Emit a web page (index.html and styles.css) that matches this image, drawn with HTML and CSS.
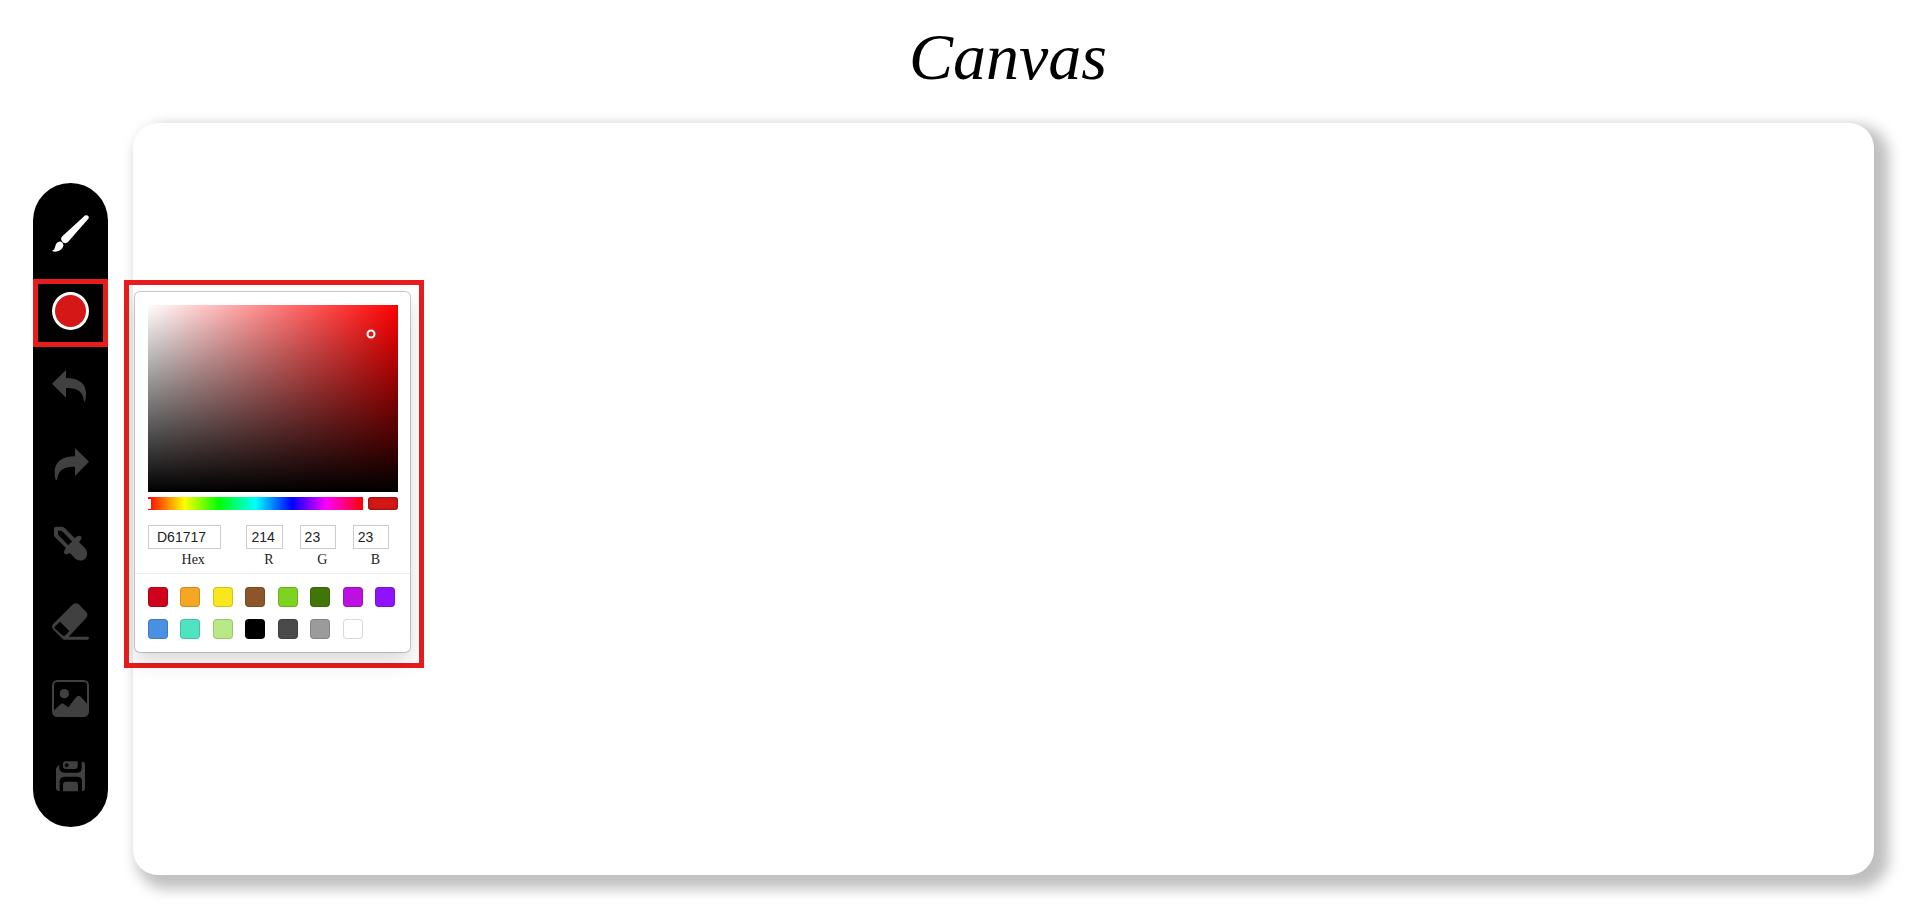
FILE: index.html
```html
<!DOCTYPE html>
<html lang="en">
<head>
<meta charset="utf-8">
<title>Canvas</title>
<link rel="stylesheet" href="styles.css">
</head>
<body>
<header class="header"><h1 class="title">Canvas</h1></header>
<main class="workspace">
  <div class="toolbar" role="toolbar" aria-label="Drawing tools">
    <button class="tool tool-active" aria-label="Brush"><svg viewBox="0 0 111 111"><path d="M98 2C105-2 114 4 109 11L50 79C45 86 36 86 31 80C26 75 26 69 31 64ZM0 108C10 104 8 96 12 88C17 79 26 77 31 83C37 90 34 97 28 103C20 110 8 112 0 108Z"/></svg></button>
    <div class="color-tool">
      <button class="tool" aria-label="Color"><span class="color-dot"></span></button>
      <div class="marker marker-tool"></div>
      <div class="marker marker-picker">
        <section class="picker" aria-label="Color picker">
          <div class="picker-main">
            <div class="saturation"><span class="pointer"></span></div>
            <div class="hue-row">
              <div class="hue"><span class="hue-handle"></span></div>
              <div class="preview"></div>
            </div>
            <div class="fields">
              <div class="field field-hex"><input id="hex" value="D61717"><label for="hex">Hex</label></div>
              <div class="field"><input id="red" value="214"><label for="red">R</label></div>
              <div class="field"><input id="green" value="23"><label for="green">G</label></div>
              <div class="field"><input id="blue" value="23"><label for="blue">B</label></div>
            </div>
          </div>
          <div class="presets">
            <button class="swatch" aria-label="Red" style="background:#d0021b"></button>
            <button class="swatch" aria-label="Orange" style="background:#f5a623"></button>
            <button class="swatch" aria-label="Yellow" style="background:#f8e71c"></button>
            <button class="swatch" aria-label="Brown" style="background:#8b572a"></button>
            <button class="swatch" aria-label="Green" style="background:#7ed321"></button>
            <button class="swatch" aria-label="Dark green" style="background:#417505"></button>
            <button class="swatch" aria-label="Magenta" style="background:#bd10e0"></button>
            <button class="swatch" aria-label="Violet" style="background:#9013fe"></button>
            <button class="swatch" aria-label="Blue" style="background:#4a90e2"></button>
            <button class="swatch" aria-label="Teal" style="background:#50e3c2"></button>
            <button class="swatch" aria-label="Light green" style="background:#b8e986"></button>
            <button class="swatch" aria-label="Black" style="background:#000000"></button>
            <button class="swatch" aria-label="Dark gray" style="background:#4a4a4a"></button>
            <button class="swatch" aria-label="Gray" style="background:#9b9b9b"></button>
            <button class="swatch" aria-label="White" style="background:#ffffff"></button>
          </div>
        </section>
      </div>
    </div>
    <button class="tool" aria-label="Undo"><svg viewBox="0 0 111 111"><path d="M0 41L42 0V24C80 24 102 40 102 70C102 80 101 90 98 95Q95 94 94 84C88 60 70 54 42 54V83Z"/></svg></button>
    <button class="tool" aria-label="Redo"><svg viewBox="0 0 111 111"><path d="M111 41L69 0V25C31 25 8 42 8 72C8 82 9 92 12 97Q15 97 17 86C23 62 41 56 69 56V84Z"/></svg></button>
    <button class="tool" aria-label="Pick color"><svg viewBox="0 0 111 111"><path fill-rule="evenodd" d="M6 10Q6 5 12 5H30Q35 6 39 10L68 40L76 34C84 29 91 36 88 42L81 51L98 68C106 77 108 90 101 99C94 108 82 109 72 103L54 84L48 86C40 91 33 84 37 77L42 69L9 37Q6 34 6 30ZM18 17V29L49 61L60 49L29 17Z"/></svg></button>
    <button class="tool" aria-label="Eraser"><svg viewBox="0 0 111 111"><path fill-rule="evenodd" d="M63 4Q71-3 80 4L102 26Q110 34 103 44L50 101H106Q111 101 111 105Q111 110 106 110H35L6 82Q-4 73 3 64ZM24 56L9 70Q6 74 10 78L30 96Q35 101 40 97L52 84Z"/></svg></button>
    <button class="tool" aria-label="Insert image"><svg viewBox="0 0 111 111"><rect x="3" y="3" width="105" height="105" rx="13" fill="none" stroke="currentColor" stroke-width="6"/><circle cx="37" cy="41" r="14"/><path d="M4 93L24 74Q31 67 38 74L49 82L71 53Q80 42 89 53L108 74V95Q107 108 95 108H16Q4 108 4 93Z"/></svg></button>
    <button class="tool" aria-label="Save"><svg viewBox="0 0 111 111"><path fill-rule="evenodd" d="M12 34Q12 30 15 27L22 20V31Q24 44 36 44H76Q89 44 89 30V11Q99 10 99 20V90Q99 99 90 100V66Q88 56 76 56H38Q25 56 23 68V100Q12 99 12 90ZM33 100V80Q33 71 42 71H69Q78 71 78 80V100ZM41 10H77V24Q77 33 68 33H42Q33 33 33 25V18Q33 10 41 10ZM44 16A6 6 0 1 0 44 28A6 6 0 1 0 44 16Z"/></svg></button>
  </div>
  <section class="board" aria-label="Drawing board"></section>
</main>
</body>
</html>
```
FILE: styles.css
```css
* { box-sizing: border-box; }
body {
  margin: 0;
  min-height: 100vh;
  display: flex;
  flex-direction: column;
  background: #fff;
  font-family: "Liberation Serif", "Times New Roman", serif;
}
.header {
  height: 123px;
  padding-left: 98px;
  text-align: center;
}
.title {
  margin: 0;
  padding-top: 12px;
  font-size: 66px;
  line-height: 90px;
  font-style: italic;
  font-weight: 400;
  font-family: Satisfy, "Liberation Serif", cursive;
  color: #000;
}
.workspace {
  flex: 1;
  display: flex;
  gap: 25px;
  padding: 0 44px 35px 33px;
}
.toolbar {
  display: flex;
  flex-direction: column;
  align-self: flex-start;
  justify-content: space-between;
  min-height: 644px;
  margin-top: 60px;
  padding: 16px 0;
  width: 75px;
  border-radius: 38px;
  background: #000;
}
.tool {
  display: flex;
  align-items: center;
  justify-content: center;
  width: 100%;
  height: 69px;
  padding: 0;
  border: 0;
  background: none;
  color: #404040;
  cursor: pointer;
}
.tool-active { color: #fff; }
.tool svg {
  width: 37px;
  height: 37px;
  fill: currentColor;
}
.color-tool { position: relative; }
.color-dot {
  width: 37px;
  height: 38px;
  border: 3px solid #fff;
  border-radius: 50%;
  background: #d61717;
}
.marker {
  position: absolute;
  border: 5px solid #e81c1c;
}
.marker-tool {
  inset: 2px 0 -1px 0;
  pointer-events: none;
}
.marker-picker {
  z-index: 1;
  top: 3px;
  left: 91px;
  padding: 7px 9px 11px 6px;
}
.picker {
  width: 275px;
  border-radius: 5px;
  background: #fff;
  box-shadow: 0 0 0 1px rgba(0, 0, 0, .2), 0 10px 20px rgba(0, 0, 0, .15);
}
.picker-main { padding: 13px 12px 5px 13px; }
.saturation {
  position: relative;
  height: 187px;
  background: linear-gradient(to top, #000, transparent), linear-gradient(to right, #fff, #f00);
}
.pointer {
  position: absolute;
  left: 89%;
  top: 16%;
  width: 9px;
  height: 9px;
  border: 2px solid #fff;
  border-radius: 50%;
  transform: translate(-50%, -50%);
}
.hue-row {
  display: flex;
  gap: 5px;
  margin-top: 5px;
  height: 13px;
}
.hue {
  position: relative;
  flex: 1;
  background: linear-gradient(to right, #f00 0%, #ff0 17%, #0f0 33%, #0ff 50%, #00f 67%, #f0f 83%, #f00 100%);
}
.hue-handle {
  position: absolute;
  left: 0;
  top: 2px;
  width: 3px;
  height: 10px;
  background: #fff;
}
.preview {
  width: 30px;
  border-radius: 3px;
  background: #d61717;
  box-shadow: inset 0 0 0 1px rgba(0, 0, 0, .15), inset 0 0 5px rgba(0, 0, 0, .25);
}
.fields {
  display: grid;
  grid-template-columns: 2fr 1fr 1fr 1fr;
  gap: 8px;
  margin-top: 15px;
}
.field {
  display: flex;
  flex-direction: column;
  gap: 3px;
  min-width: 0;
}
.field input {
  width: 81%;
  height: 24px;
  padding: 0 0 0 4px;
  border: 1px solid #ccc;
  background: #fff;
  color: #222;
  font: 14px "Liberation Sans", Arial, sans-serif;
}
.field-hex input { padding-left: 8px; }
.field label {
  text-align: center;
  font-size: 14px;
  line-height: 16px;
  color: #222;
}
.presets {
  display: grid;
  grid-template-columns: repeat(8, 20px);
  justify-content: space-between;
  row-gap: 12px;
  padding: 13px 15px 13px 13px;
  border-top: 1px solid #eee;
}
.swatch {
  height: 20px;
  padding: 0;
  border: 0;
  border-radius: 4px;
  box-shadow: inset 0 0 0 1px rgba(0, 0, 0, .15);
  cursor: pointer;
}
.board {
  flex: 1;
  min-width: 0;
  border-radius: 25px;
  background: #fff;
  box-shadow: 9px 8px 14px 6px rgba(0, 0, 0, .25);
}
```
